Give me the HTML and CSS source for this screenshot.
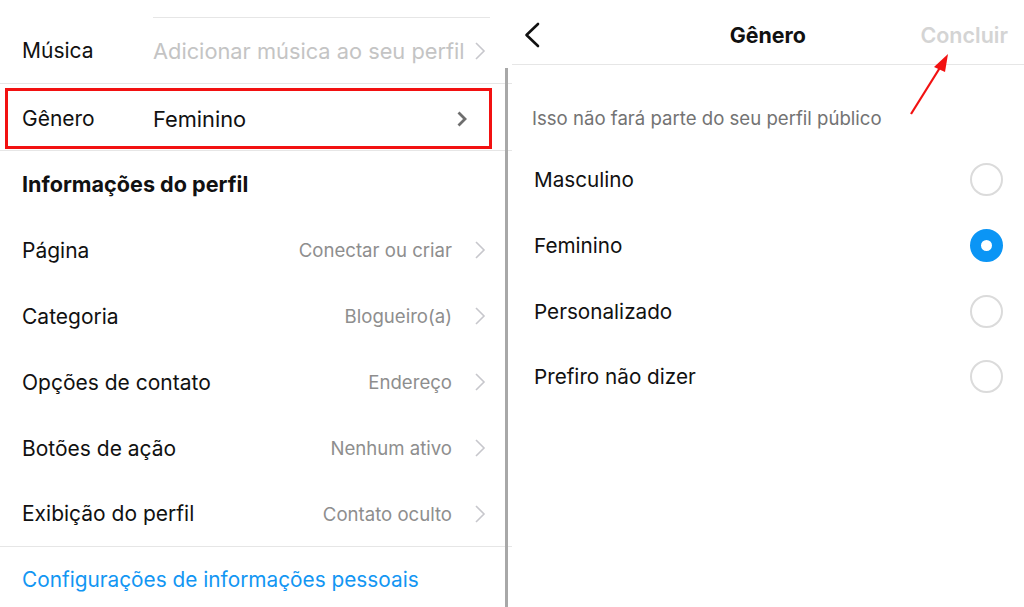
FILE: index.html
```html
<!DOCTYPE html>
<html lang="pt-BR">
<head>
<meta charset="utf-8">
<title>Gênero</title>
<link rel="stylesheet" href="styles.css">
</head>
<body>
<div class="screen">
  <section class="left">
    <div class="top-gap"><div class="inset-line"></div></div>
    <div class="row">
      <span class="label">Música</span>
      <span class="value-left placeholder">Adicionar música ao seu perfil</span>
      <svg class="chev" viewBox="0 0 12 20"><path d="M2 2 L10 10 L2 18"/></svg>
    </div>
    <div class="row-wrap">
      <div class="row gender">
        <span class="label">Gênero</span>
        <span class="value-left dark">Feminino</span>
        <svg class="chev-dark" viewBox="0 0 12 18"><path d="M2.5 2.5 L9 9 L2.5 15.5"/></svg>
      </div>
    </div>
    <div class="section-title">Informações do perfil</div>
    <div class="row plain">
      <span class="label">Página</span>
      <span class="value">Conectar ou criar</span>
      <svg class="chev" viewBox="0 0 12 20"><path d="M2 2 L10 10 L2 18"/></svg>
    </div>
    <div class="row plain">
      <span class="label">Categoria</span>
      <span class="value">Blogueiro(a)</span>
      <svg class="chev" viewBox="0 0 12 20"><path d="M2 2 L10 10 L2 18"/></svg>
    </div>
    <div class="row plain">
      <span class="label">Opções de contato</span>
      <span class="value">Endereço</span>
      <svg class="chev" viewBox="0 0 12 20"><path d="M2 2 L10 10 L2 18"/></svg>
    </div>
    <div class="row plain">
      <span class="label">Botões de ação</span>
      <span class="value">Nenhum ativo</span>
      <svg class="chev" viewBox="0 0 12 20"><path d="M2 2 L10 10 L2 18"/></svg>
    </div>
    <div class="row plain last">
      <span class="label">Exibição do perfil</span>
      <span class="value">Contato oculto</span>
      <svg class="chev" viewBox="0 0 12 20"><path d="M2 2 L10 10 L2 18"/></svg>
    </div>
    <div class="link">Configurações de informações pessoais</div>
    <div class="scrollbar"></div>
  </section>

  <section class="right">
    <header class="nav">
      <svg class="back" viewBox="0 0 18 26"><path d="M15 2 L3.5 13 L15 24"/></svg>
      <h1 class="nav-title">Gênero</h1>
      <span class="done">Concluir</span>
    </header>
    <p class="hint">Isso não fará parte do seu perfil público</p>
    <ul class="options">
      <li class="option"><span>Masculino</span><span class="radio"></span></li>
      <li class="option"><span>Feminino</span><span class="radio checked"></span></li>
      <li class="option"><span>Personalizado</span><span class="radio"></span></li>
      <li class="option"><span>Prefiro não dizer</span><span class="radio"></span></li>
    </ul>
    <svg class="arrow" viewBox="0 0 50 70"><line x1="6" y1="64" x2="36" y2="16"/><path d="M43 4 L29 17 L40 22 Z"/></svg>
  </section>
</div>
</body>
</html>
```

FILE: styles.css
```css
* { box-sizing: border-box; }
html, body {
  margin: 0;
  padding: 0;
  background: #fff;
}
body {
  font-family: "Inter", "Roboto", "Liberation Sans", sans-serif;
  color: #111;
  -webkit-font-smoothing: antialiased;
}
.screen {
  display: flex;
  width: 1024px;
  height: 607px;
  overflow: hidden;
}
.left {
  position: relative;
  width: 512px;
  flex: none;
}
.top-gap {
  height: 18px;
  display: flex;
  align-items: flex-end;
  padding-left: 153px;
  padding-right: 22px;
}
.inset-line {
  height: 1px;
  background: #e6e6e6;
  width: 100%;
}
.row {
  display: flex;
  align-items: center;
  height: 66px;
  padding: 0 26px 0 22px;
  font-size: 21px;
  border-bottom: 1px solid #e6e6e6;
}
.row.plain { border-bottom: none; }
.row.plain.last { border-bottom: 1px solid #e6e6e6; height: 66px; }
.label {
  width: 131px;
  flex: none;
  white-space: nowrap;
  color: #111;
}
.row.plain .label { flex: 1; width: auto; }
.value-left {
  flex: 1;
  white-space: nowrap;
}
.placeholder { color: #c4c4c4; font-size: 21.8px; }
.dark { color: #111; font-size: 21.8px; }
.value {
  color: #8e8e8e;
  font-size: 18.6px;
  margin-right: 22px;
  white-space: nowrap;
}
.chev {
  width: 12px;
  height: 20px;
  flex: none;
  fill: none;
  stroke: #c7c7cc;
  stroke-width: 1.6;
}
.row-wrap {
  height: 67px;
  padding: 4px 20px 1px 5px;
  border-bottom: 1px solid #e6e6e6;
}
.row.gender {
  height: 61px;
  border: 3px solid #f21111;
  padding: 0 21px 0 14px;
}
.chev-dark {
  width: 12px;
  height: 18px;
  flex: none;
  fill: none;
  stroke: #6e6e6e;
  stroke-width: 2.8;
}
.section-title {
  height: 66px;
  display: flex;
  align-items: center;
  padding-left: 22px;
  font-size: 21.6px;
  font-weight: 700;
  color: #111;
}
.link {
  height: 64px;
  display: flex;
  align-items: center;
  padding-left: 22px;
  font-size: 20.8px;
  color: #1296f3;
}
.scrollbar {
  position: absolute;
  right: 4px;
  top: 68px;
  bottom: 0;
  width: 3px;
  background: #a8a8a8;
}

.right {
  position: relative;
  flex: 1;
}
.nav {
  height: 65px;
  display: flex;
  align-items: center;
  justify-content: space-between;
  padding: 5px 16px 0 11px;
  border-bottom: 1px solid #e6e6e6;
}
.back {
  width: 18px;
  height: 26px;
  fill: none;
  stroke: #111;
  stroke-width: 2.6;
  stroke-linecap: round;
  stroke-linejoin: round;
}
.nav-title {
  margin: 0;
  font-size: 21.4px;
  font-weight: 700;
  color: #111;
  margin-left: 74px;
}
.done {
  font-size: 21.5px;
  font-weight: 600;
  color: #d4d4d4;
}
.hint {
  margin: 0;
  height: 106px;
  display: flex;
  align-items: center;
  padding: 0 0 0 20px;
  font-size: 18.6px;
  color: #737373;
  margin-bottom: -24px;
}
.options {
  list-style: none;
  margin: 0;
  padding: 0 21px 0 22px;
}
.option {
  height: 65.7px;
  display: flex;
  align-items: center;
  justify-content: space-between;
  font-size: 20.7px;
  color: #111;
}
.radio {
  width: 33px;
  height: 33px;
  border-radius: 50%;
  border: 2px solid #dbdbdb;
}
.radio.checked {
  border: 11.5px solid #0b95f5;
  background: #fff;
}
.arrow {
  position: absolute;
  left: 393px;
  top: 50px;
  width: 50px;
  height: 70px;
}
.arrow line { stroke: #f21111; stroke-width: 2.2; }
.arrow path { fill: #f21111; }
```
